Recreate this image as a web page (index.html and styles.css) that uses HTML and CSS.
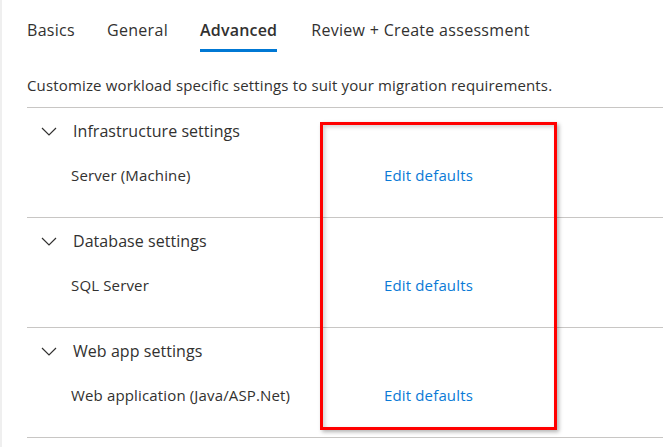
FILE: index.html
```html
<!DOCTYPE html>
<html lang="en">
<head>
<meta charset="utf-8">
<title>Advanced</title>
<link rel="stylesheet" href="styles.css">
</head>
<body>
<div class="frame">
  <nav class="tabs">
    <span class="tab">Basics</span>
    <span class="tab">General</span>
    <span class="tab active">Advanced</span>
    <span class="tab">Review + Create assessment</span>
  </nav>
  <p class="desc">Customize workload specific settings to suit your migration requirements.</p>
  <div class="sections">
    <section class="section">
      <div class="head">
        <svg class="chev" width="16" height="9" viewBox="0 0 16 9"><path d="M1 1 L8 8 L15 1" fill="none" stroke="#323130" stroke-width="1.2"/></svg>
        <span class="title">Infrastructure settings</span>
      </div>
      <div class="row"><span class="label">Server (Machine)</span><a class="link">Edit defaults</a></div>
    </section>
    <section class="section">
      <div class="head">
        <svg class="chev" width="16" height="9" viewBox="0 0 16 9"><path d="M1 1 L8 8 L15 1" fill="none" stroke="#323130" stroke-width="1.2"/></svg>
        <span class="title">Database settings</span>
      </div>
      <div class="row"><span class="label">SQL Server</span><a class="link">Edit defaults</a></div>
    </section>
    <section class="section">
      <div class="head">
        <svg class="chev" width="16" height="9" viewBox="0 0 16 9"><path d="M1 1 L8 8 L15 1" fill="none" stroke="#323130" stroke-width="1.2"/></svg>
        <span class="title">Web app settings</span>
      </div>
      <div class="row"><span class="label">Web application (Java/ASP.Net)</span><a class="link">Edit defaults</a></div>
    </section>
    <div class="highlight"></div>
  </div>
</div>
</body>
</html>
```
FILE: styles.css
```css
html, body {
  margin: 0;
  padding: 0;
  background: #ffffff;
}
body {
  font-family: "Segoe UI", "Open Sans", "Noto Sans", sans-serif;
  color: #323130;
  width: 663px;
  height: 447px;
  overflow: hidden;
}
.frame {
  border-left: 2px solid #efefef;
  height: 447px;
  padding-left: 25px;
}
.tabs {
  display: flex;
  padding-top: 19px;
}
.tab {
  font-size: 16px;
  line-height: 22px;
  letter-spacing: 0.3px;
  padding-bottom: 8px;
  border-bottom: 3px solid transparent;
  margin-right: 32px;
  white-space: nowrap;
}
.tab.active {
  font-weight: 600;
  letter-spacing: 0.2px;
  margin-right: 34px;
  border-bottom-color: #0078d4;
}
.desc {
  margin: 23px 0 12px 0;
  font-size: 15px;
  letter-spacing: 0.15px;
  line-height: 20px;
}
.sections {
  position: relative;
  border-top: 1px solid #c8c6c4;
}
.section {
  border-bottom: 1px solid #c8c6c4;
  padding: 11px 0 32px 0;
}
.head {
  display: flex;
  align-items: center;
  height: 24px;
  padding-left: 14px;
}
.chev {
  display: block;
  margin-right: 16px;
}
.title {
  font-size: 16px;
  line-height: 24px;
  letter-spacing: 0.05px;
}
.row {
  display: flex;
  margin-top: 22px;
  padding-left: 44px;
  font-size: 15px;
  letter-spacing: 0.15px;
  line-height: 20px;
}
.label {
  width: 313px;
}
.link {
  color: #0a7ad6;
}
.highlight {
  position: absolute;
  left: 293px;
  top: 14px;
  width: 231px;
  height: 302px;
  border: 3px solid #ff0000;
  box-shadow: 2px 2px 4px rgba(0,0,0,0.3), inset 2px 2px 4px rgba(0,0,0,0.18);
}
```
